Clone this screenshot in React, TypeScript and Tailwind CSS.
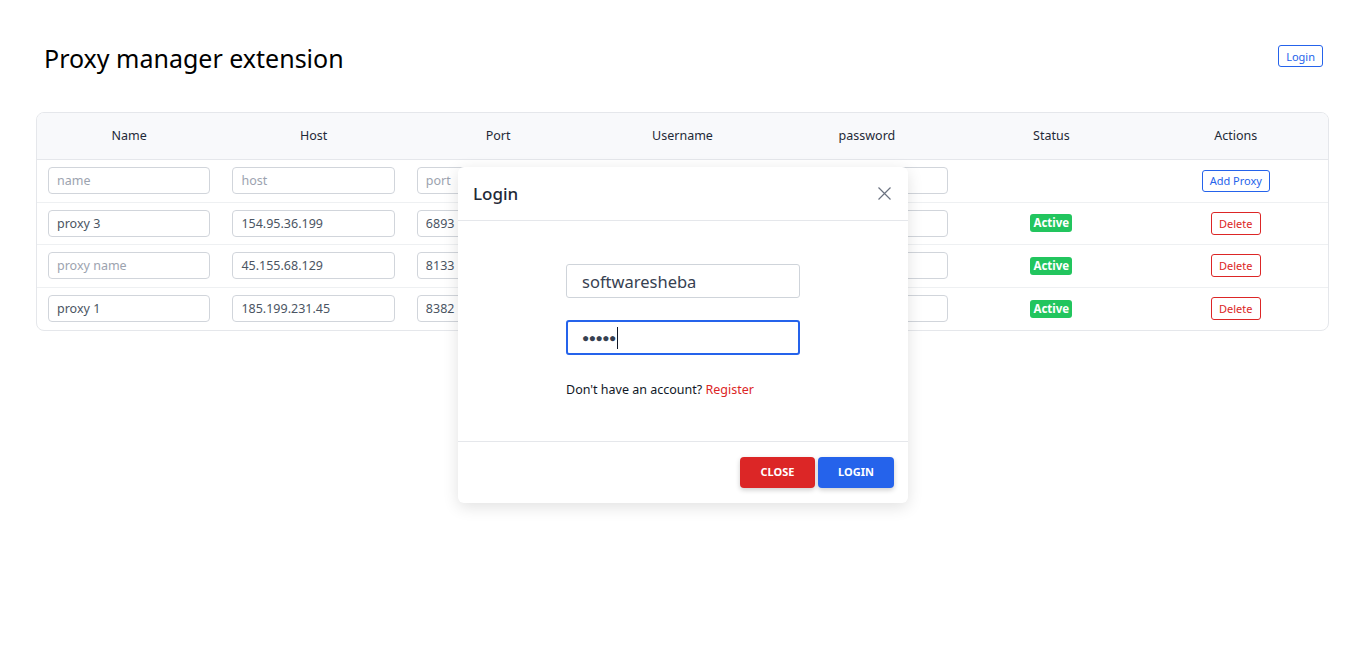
import React from "react";

const rows = [
  { name: "proxy 3", host: "154.95.36.199", port: "6893", ph: "name" },
  { name: "", host: "45.155.68.129", port: "8133", ph: "proxy name" },
  { name: "proxy 1", host: "185.199.231.45", port: "8382", ph: "name" },
];

const inputCls =
  "w-full h-[27px] rounded-[4px] border border-[#d1d5db] px-2 text-[12.5px] text-[#4b5563] placeholder-[#9ca3af] outline-none bg-white";

function Cell({ children }: { children?: React.ReactNode }) {
  return <div className="px-[11px] flex items-center justify-center">{children}</div>;
}

export default function App() {
  return (
    <div
      className="relative min-h-[667px] bg-white text-[#111827]"
      style={{ fontFamily: '"Noto Sans", "Segoe UI", sans-serif' }}
    >
      <div className="pl-[36px] pr-[37px] pt-[40px]">
        <div className="flex items-start justify-between pl-[8px] pr-[6px]">
          <h1 className="text-[25px] leading-[36px] font-normal text-black">Proxy manager extension</h1>
          <button className="mt-[5px] h-[22px] px-[7px] rounded-[3px] border border-[#2563eb] text-[#2563eb] text-[11px] leading-none">
            Login
          </button>
        </div>

        <div className="mt-[36px] rounded-[8px] border border-[#e5e7eb] overflow-hidden">
          <div className="grid grid-cols-7 h-[47px] bg-[#f8f9fb] border-b border-[#e5e7eb] text-[12.5px] text-[#1f2937] items-center text-center">
            <div>Name</div>
            <div>Host</div>
            <div>Port</div>
            <div>Username</div>
            <div>password</div>
            <div>Status</div>
            <div>Actions</div>
          </div>
          <div className="grid grid-cols-7 h-[42.5px] border-b border-[#eef0f2]">
            <Cell><input className={inputCls} placeholder="name" /></Cell>
            <Cell><input className={inputCls} placeholder="host" /></Cell>
            <Cell><input className={inputCls} placeholder="port" /></Cell>
            <Cell><input className={inputCls} placeholder="username" /></Cell>
            <Cell><input className={inputCls} placeholder="password" /></Cell>
            <Cell />
            <Cell>
              <button className="h-[22px] px-[7px] rounded-[3px] border border-[#2563eb] text-[#2563eb] text-[11px] leading-none">
                Add Proxy
              </button>
            </Cell>
          </div>
          {rows.map((r, i) => (
            <div
              key={i}
              className={`grid grid-cols-7 h-[42.5px] ${i < rows.length - 1 ? "border-b border-[#eef0f2]" : ""}`}
            >
              <Cell><input className={inputCls} placeholder={r.ph} defaultValue={r.name} /></Cell>
              <Cell><input className={inputCls} defaultValue={r.host} /></Cell>
              <Cell><input className={inputCls} defaultValue={r.port} /></Cell>
              <Cell><input className={inputCls} defaultValue="" /></Cell>
              <Cell><input className={inputCls} defaultValue="" /></Cell>
              <Cell>
                <span className="h-[18px] px-[3px] rounded-[3px] bg-[#22c55e] text-white text-[11.5px] font-bold leading-[18px]">
                  Active
                </span>
              </Cell>
              <Cell>
                <button className="h-[23px] px-[7px] rounded-[3px] border border-[#dc2626] text-[#dc2626] text-[11px] leading-none">
                  Delete
                </button>
              </Cell>
            </div>
          ))}
        </div>
      </div>

      {/* Modal */}
      <div className="absolute left-[458px] top-[167px] w-[450px] bg-white rounded-[6px] shadow-[0_4px_16px_rgba(0,0,0,0.12)]">
        <div className="h-[54px] flex items-center justify-between px-[15px] border-b border-[#e5e7eb]">
          <h2 className="text-[17px] font-medium text-[#1f2937]">Login</h2>
          <svg width="13" height="13" viewBox="0 0 13 13" className="mr-[2px]">
            <path d="M0.5 0.5 L12.5 12.5 M12.5 0.5 L0.5 12.5" stroke="#6b7280" strokeWidth="1.2" />
          </svg>
        </div>
        <div className="h-[221px] flex flex-col items-center pt-[43px] border-b border-[#e5e7eb]">
          <div className="w-[234px]">
            <input
              className="w-full h-[34px] rounded-[3px] border border-[#cfd4da] px-[15px] text-[16.5px] text-[#374151] outline-none"
              defaultValue="softwaresheba"
            />
            <div className="relative mt-[22px] w-full h-[35px] rounded-[3px] border-2 border-[#2563eb] px-[14px] flex items-center">
              <span className="text-[12px] tracking-[-0.5px] text-[#374151]">●●●●●</span>
              <span className="ml-[1px] w-[1px] h-[22px] bg-[#111827]" />
            </div>
            <p className="mt-[26px] text-[12.5px] text-[#111827]">
              Don't have an account? <span className="text-[#dc2626]">Register</span>
            </p>
          </div>
        </div>
        <div className="h-[61px] flex items-center justify-end gap-[3px] px-[14px]">
          <button className="w-[75px] h-[31px] rounded-[4px] bg-[#dc2626] text-white text-[11px] font-bold uppercase shadow-[0_2px_5px_rgba(0,0,0,0.2)]">
            Close
          </button>
          <button className="w-[76px] h-[31px] rounded-[4px] bg-[#2563eb] text-white text-[11px] font-bold uppercase shadow-[0_2px_5px_rgba(0,0,0,0.2)]">
            Login
          </button>
        </div>
      </div>
    </div>
  );
}
